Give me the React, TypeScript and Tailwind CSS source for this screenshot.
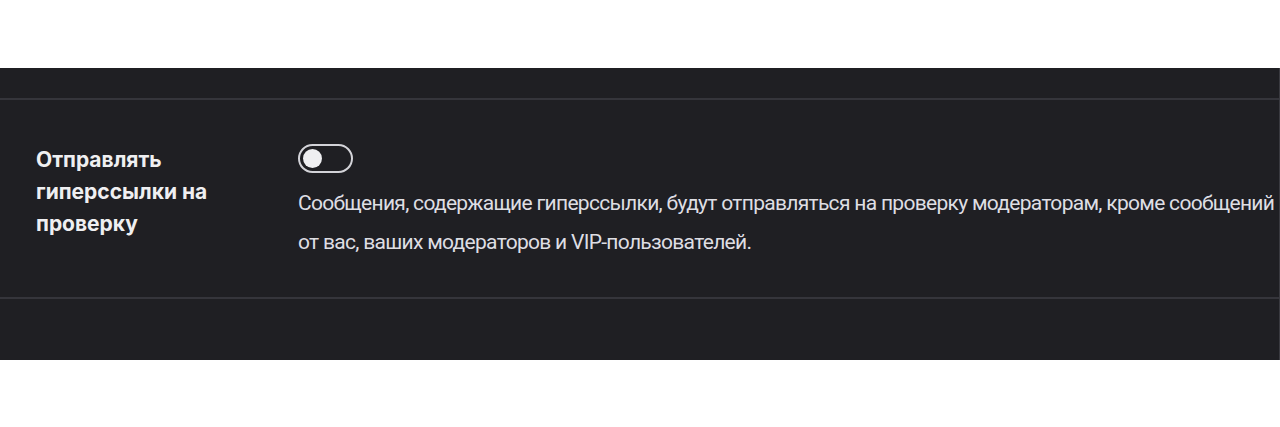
export default function App() {
  return (
    <div className="w-[1280px] h-[427px] bg-white pt-[68px]">
      <div className="h-[292px] bg-[#1f1f23] border-r border-[#3a3a40] flex flex-col">
        <div className="h-[32px] border-b-2 border-[#35353b]" />
        <div className="h-[199px] border-b-2 border-[#35353b] flex pl-[36px] pt-[44px]">
          {/* setting title */}
          <div className="w-[262px] font-['Inter',sans-serif] font-bold text-[21px] leading-[32px] text-[#efeff1]">
            Отправлять
            <br />
            гиперссылки на
            <br />
            проверку
          </div>

          {/* toggle + description */}
          <div className="flex flex-col">
            <button className="w-[55px] h-[29px] rounded-full border-2 border-[#d3d3d8] flex items-center px-[3px]">
              <span className="w-[19px] h-[19px] rounded-full bg-[#efeff1]" />
            </button>
            <p className="mt-[11px] font-['Roboto',sans-serif] text-[21px] tracking-[-0.7px] leading-[39px] text-[#dedee3] w-[980px]">
              Сообщения, содержащие гиперссылки, будут отправляться на проверку модераторам, кроме сообщений от вас, ваших модераторов и VIP-пользователей.
            </p>
          </div>
        </div>
      </div>
    </div>
  );
}
